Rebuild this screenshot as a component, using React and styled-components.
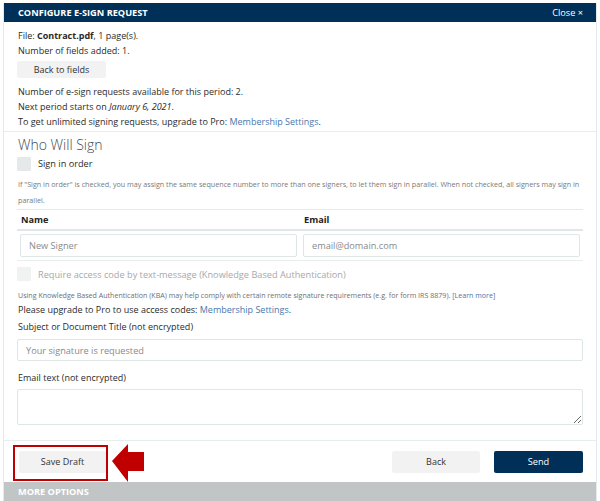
import React from "react";
import styled, { createGlobalStyle } from "styled-components";

const GlobalStyle = createGlobalStyle`
  html, body {
    margin: 0;
    padding: 0;
    background: #ffffff;
  }
  body {
    font-family: "Open Sans", "Noto Sans", sans-serif;
    color: #2b2b2b;
  }
  * {
    box-sizing: border-box;
  }
`;

const Dialog = styled.div`
  position: relative;
  width: 594px;
  height: 498px;
  margin: 3px 0 0 3px;
  border-left: 1px solid #e3e9e9;
  border-right: 1px solid #e3e9e9;
  display: flex;
  flex-direction: column;
  overflow: hidden;
`;

const Header = styled.div`
  height: 19px;
  background: #003057;
  color: #ffffff;
  display: flex;
  align-items: center;
  justify-content: space-between;
  padding: 0 13px 0 14px;
  font-size: 9.2px;
`;

const HeaderTitle = styled.span`
  font-weight: 700;
`;

const Section = styled.div`
  padding: ${(p) => p.$pad || "0"};
  padding-left: 14px;
  padding-right: 12px;
  border-bottom: 1px solid #e8eeee;
`;

const Line = styled.div`
  font-size: ${(p) => p.$size || "9px"};
  line-height: ${(p) => p.$lh || "15px"};
  color: ${(p) => p.$color || "#2b2b2b"};
  margin-top: ${(p) => p.$mt || "0"};
  margin-bottom: ${(p) => p.$mb || "0"};
`;

const Link = styled.span`
  color: #4678ad;
`;

const GreyButton = styled.button`
  display: block;
  border: none;
  background: #f2f2f2;
  color: #333;
  font-family: inherit;
  font-size: 9px;
  width: ${(p) => p.$w || "89px"};
  height: ${(p) => p.$h || "17px"};
  margin-top: ${(p) => p.$mt || "0"};
  margin-left: ${(p) => p.$ml || "-1px"};
  padding: 0;
  border-radius: 2px;
`;

const Heading = styled.div`
  font-size: 14px;
  font-weight: 300;
  color: #3f4a55;
  line-height: 18px;
  margin-top: 4px;
`;

const CheckRow = styled.div`
  display: flex;
  align-items: center;
  gap: 7px;
  margin-top: ${(p) => p.$mt || "0"};
  margin-left: -1px;
  height: 14px;
  font-size: 9.2px;
  color: ${(p) => (p.$disabled ? "#a8a8a8" : "#2b2b2b")};
`;

const Box = styled.span`
  width: 14px;
  height: 14px;
  background: ${(p) => (p.$disabled ? "#f0f1f1" : "#e6e9ea")};
  border-radius: 1px;
  flex: none;
`;

const Table = styled.table`
  width: 566px;
  margin-left: -1px;
  border-collapse: collapse;
  table-layout: fixed;
  border-top: 1px solid #e6eaea;
`;

const Th = styled.th`
  text-align: left;
  font-size: 9.2px;
  font-weight: 700;
  color: #222;
  height: 21px;
  padding: 0 4px;
  border-bottom: 2px solid #e2e6e8;
`;

const Td = styled.td`
  padding: 3px;
  border-bottom: 1px solid #e8eded;
`;

const Input = styled.input`
  display: block;
  width: ${(p) => p.$w || "100%"};
  height: ${(p) => p.$h || "23px"};
  border: 1px solid #dfe6e6;
  border-radius: 2px;
  padding: 0 8px;
  font-family: inherit;
  font-size: 9.2px;
  color: #333;
  margin-top: ${(p) => p.$mt || "0"};
  margin-left: ${(p) => p.$ml || "0"};
  &::placeholder {
    color: #8a8a8a;
  }
`;

const TextArea = styled.textarea`
  display: block;
  width: 566px;
  margin-left: -1px;
  height: 36px;
  border: 1px solid #dfe6e6;
  border-radius: 2px;
  margin-top: ${(p) => p.$mt || "0"};
  font-family: inherit;
`;

const Footer = styled.div`
  display: flex;
  align-items: center;
  height: 41px;
  padding: 0 13px 0 15px;
  position: relative;
`;

const Spacer = styled.div`
  flex: 1;
`;

const SendButton = styled.button`
  width: 89px;
  height: 22px;
  border: none;
  background: #003057;
  color: #fff;
  font-family: inherit;
  font-size: 9.2px;
  border-radius: 2px;
  margin-left: 14px;
`;

const Highlight = styled.div`
  position: absolute;
  left: 9px;
  top: 4px;
  width: 95px;
  height: 36px;
  border: 2px solid #c00000;
`;

const Arrow = styled.svg`
  position: absolute;
  left: 104px;
  top: 2px;
`;

const MoreBar = styled.div`
  height: 19px;
  background: #c1c5c5;
  color: #ffffff;
  font-weight: 700;
  font-size: 9.2px;
  display: flex;
  align-items: center;
  padding-left: 14px;
`;

export default function App() {
  return (
    <>
      <GlobalStyle />
      <Dialog>
        <Header>
          <HeaderTitle>CONFIGURE E-SIGN REQUEST</HeaderTitle>
          <span>Close ×</span>
        </Header>

        <Section $pad="6px 0 2px">
          <Line>
            File: <b>Contract.pdf</b>, 1 page(s).
          </Line>
          <Line>Number of fields added: 1.</Line>
          <GreyButton $mt="3px">Back to fields</GreyButton>
          <Line $mt="6px">Number of e-sign requests available for this period: 2.</Line>
          <Line>
            Next period starts on <i>January 6, 2021</i>.
          </Line>
          <Line>
            To get unlimited signing requests, upgrade to Pro: <Link>Membership Settings</Link>.
          </Line>
        </Section>

        <Section $pad="0 0 15px">
          <Heading>Who Will Sign</Heading>
          <CheckRow $mt="3px">
            <Box />
            Sign in order
          </CheckRow>
          <Line $size="7.2px" $lh="16px" $color="#7a7a7a" $mt="5px" $mb="1px">
            If "Sign in order" is checked, you may assign the same sequence number to more than one signers, to let them sign in parallel. When not checked, all signers may sign in parallel.
          </Line>
          <Table>
            <colgroup>
              <col style={{ width: "50%" }} />
              <col style={{ width: "50%" }} />
            </colgroup>
            <thead>
              <tr>
                <Th>Name</Th>
                <Th>Email</Th>
              </tr>
            </thead>
            <tbody>
              <tr>
                <Td>
                  <Input placeholder="New Signer" />
                </Td>
                <Td>
                  <Input placeholder="email@domain.com" />
                </Td>
              </tr>
            </tbody>
          </Table>
          <CheckRow $mt="6px" $disabled>
            <Box $disabled />
            Require access code by text-message (Knowledge Based Authentication)
          </CheckRow>
          <Line $size="7.1px" $lh="14px" $color="#6f6f6f" $mt="7px">
            Using Knowledge Based Authentication (KBA) may help comply with certain remote signature requirements (e.g. for form IRS 8879). <Link>[Learn more]</Link>
          </Line>
          <Line>
            Please upgrade to Pro to use access codes: <Link>Membership Settings</Link>.
          </Line>
          <Line $mt="2px">Subject or Document Title (not encrypted)</Line>
          <Input $h="22px" $mt="5px" $w="566px" $ml="-1px" placeholder="Your signature is requested" />
          <Line $mt="9px">Email text (not encrypted)</Line>
          <TextArea $mt="4px" />
        </Section>

        <Footer>
          <GreyButton $w="87px" $h="22px" $ml="0">Save Draft</GreyButton>
          <Spacer />
          <GreyButton $w="88px" $h="22px" $ml="0">Back</GreyButton>
          <SendButton>Send</SendButton>
          <Highlight />
          <Arrow width="36" height="40" viewBox="0 0 36 40">
            <polygon points="4,18 20,1 20,9 36,9 36,28 20,28 20,39" fill="#c00000" />
          </Arrow>
        </Footer>

        <MoreBar>MORE OPTIONS</MoreBar>
      </Dialog>
    </>
  );
}
